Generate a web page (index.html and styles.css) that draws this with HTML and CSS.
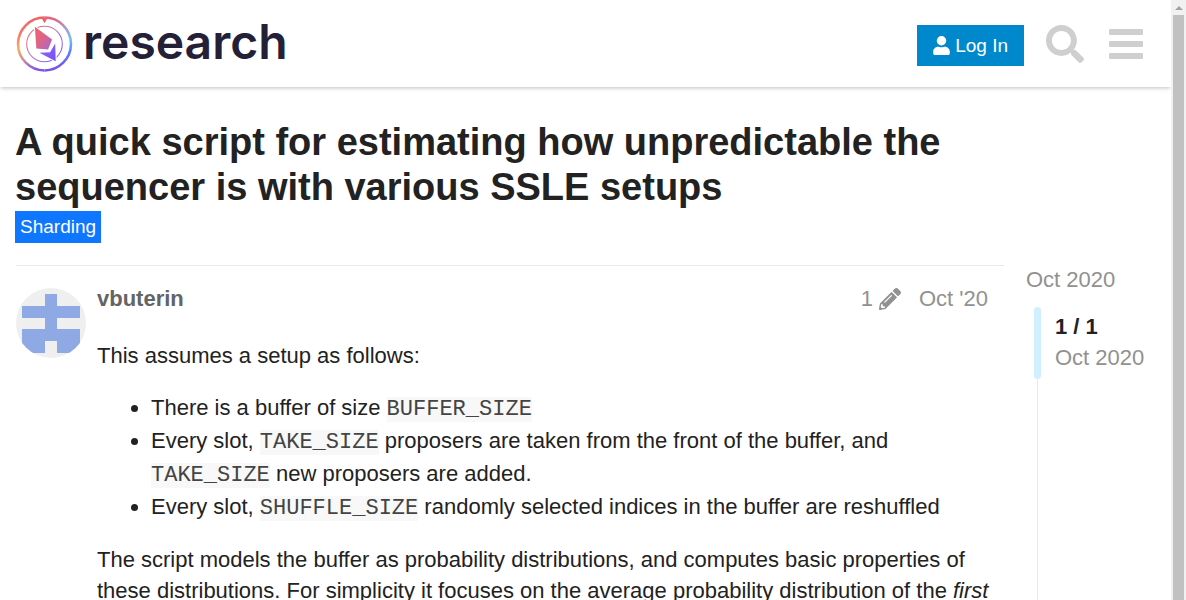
FILE: index.html
```html
<!DOCTYPE html>
<html lang="en">
<head>
<meta charset="utf-8">
<meta name="viewport" content="width=device-width, initial-scale=1">
<title>A quick script for estimating how unpredictable the sequencer is</title>
<link rel="stylesheet" href="styles.css">
</head>
<body>
<div class="viewport">
  <div class="page">
    <header class="header">
      <a class="logo" href="#">
        <svg class="logo-mark" viewBox="0 0 56 56" aria-hidden="true">
          <defs>
            <linearGradient id="warm" x1="0" y1="0" x2="0" y2="1">
              <stop offset="0" stop-color="#f2625f"/><stop offset=".3" stop-color="#fa7468"/><stop offset=".6" stop-color="#f9ae61"/><stop offset=".82" stop-color="#c78aa5"/><stop offset="1" stop-color="#7a50ea"/>
            </linearGradient>
            <linearGradient id="cool" x1="0" y1="0" x2="0" y2="1">
              <stop offset="0" stop-color="#e8607a"/><stop offset=".2" stop-color="#a99bc8"/><stop offset=".42" stop-color="#69c4ee"/><stop offset=".68" stop-color="#5c78ff"/><stop offset="1" stop-color="#7a50ea"/>
            </linearGradient>
            <linearGradient id="inner" x1="0" y1="0" x2="1" y2="1">
              <stop offset="0" stop-color="#f66d68"/><stop offset=".5" stop-color="#b276bd"/><stop offset="1" stop-color="#6c5cff"/>
            </linearGradient>
            <linearGradient id="gem" x1="0" y1="0" x2="1" y2="1">
              <stop offset="0" stop-color="#f5616c"/><stop offset=".5" stop-color="#dc6489"/><stop offset="1" stop-color="#9c69d8"/>
            </linearGradient>
            <linearGradient id="shard" x1="0" y1="0" x2="1" y2="1">
              <stop offset="0" stop-color="#a466e5"/><stop offset="1" stop-color="#6e50ff"/>
            </linearGradient>
          </defs>
          <path d="M28 2.500A26 26 0 0 0 28 54.500" fill="none" stroke="url(#warm)" stroke-width="2.500"/>
          <path d="M28 2.500A26 26 0 0 1 28 54.500" fill="none" stroke="url(#cool)" stroke-width="2.500"/>
          <path d="M25 3h6L28 8z" fill="#ec6270"/>
          <circle cx="28" cy="28.500" r="17.500" fill="none" stroke="url(#inner)" stroke-width="1"/>
          <path d="M18.500 11.500 35.500 24 31.500 34 20 33z" fill="url(#gem)" stroke="#fff" stroke-width="2" paint-order="stroke"/>
          <path d="M23 37 33.500 36.500 38.500 28 39 45.500z" fill="url(#shard)" stroke="#fff" stroke-width="2" paint-order="stroke"/>
        </svg>
        <span class="logo-text">research</span>
      </a>
      <nav class="header-actions">
        <button class="login" type="button">
          <svg class="login-icon" viewBox="0 0 448 512" aria-hidden="true"><path fill="currentColor" d="M224 256a128 128 0 1 0 0-256 128 128 0 0 0 0 256zm90 32h-17a174 174 0 0 1-146 0h-17C60 288 0 348 0 422v42c0 27 21 48 48 48h352c27 0 48-21 48-48v-42c0-74-60-134-134-134z"/></svg>
          <span>Log In</span>
        </button>
        <button class="icon-button" type="button" aria-label="Search">
          <svg class="search-icon" viewBox="0 0 512 512" aria-hidden="true"><path fill="currentColor" d="M505 442.700 405.300 343c-4.500-4.500-10.600-7-17-7H372c27.600-35.300 44-79.700 44-128C416 93.100 322.900 0 208 0S0 93.100 0 208s93.100 208 208 208c48.300 0 92.700-16.400 128-44v16.300c0 6.400 2.500 12.500 7 17l99.700 99.700c9.400 9.400 24.600 9.400 33.900 0l28.300-28.300c9.400-9.400 9.400-24.600.1-34zM208 336c-70.700 0-128-57.200-128-128 0-70.700 57.200-128 128-128 70.700 0 128 57.200 128 128 0 70.700-57.200 128-128 128z"/></svg>
        </button>
        <button class="icon-button" type="button" aria-label="Menu">
          <svg class="menu-icon" viewBox="0 0 34 38" aria-hidden="true"><g fill="currentColor"><rect y="4" width="34" height="6" rx="1"/><rect y="16" width="34" height="6" rx="1"/><rect y="28" width="34" height="6" rx="1"/></g></svg>
        </button>
      </nav>
    </header>
    <main class="topic">
      <h1 class="title">A quick script for estimating how unpredictable the sequencer is with various SSLE setups</h1>
      <a class="category" href="#">Sharding</a>
      <div class="columns">
        <article class="post">
          <svg class="avatar" viewBox="0 0 70 70" role="img" aria-label="vbuterin">
            <defs><clipPath id="round"><circle cx="35" cy="35" r="35"/></clipPath></defs>
            <g clip-path="url(#round)"><path fill="#efefef" d="M0 0h70v70H0z"/><path fill="#8ea9e4" d="M29 6h12v12h23v12H41v11h23v24H41V53H29v12H6V41h23V30H6V18h23z"/></g>
          </svg>
          <div class="post-main">
            <div class="meta">
              <a class="author" href="#">vbuterin</a>
              <div class="meta-right">
                <button class="edits" type="button" aria-label="1 edit">
                  <span>1</span>
                  <svg class="pencil" viewBox="0 0 512 512" aria-hidden="true"><path fill="currentColor" d="M497.900 142.100l-46.100 46.100c-4.700 4.700-12.300 4.700-17 0l-111-111c-4.700-4.700-4.700-12.300 0-17l46.100-46.100c18.700-18.700 49.100-18.700 67.900 0l60.100 60.100c18.800 18.700 18.800 49.100 0 67.900zM284.200 99.800L21.600 362.400.4 483.900c-2.900 16.400 11.400 30.600 27.800 27.800l121.500-21.300 262.600-262.600c4.700-4.700 4.700-12.300 0-17l-111-111c-4.800-4.700-12.400-4.700-17.100 0zM124.100 339.900c-5.500-5.500-5.500-14.300 0-19.800l154-154c5.500-5.500 14.300-5.500 19.800 0s5.500 14.300 0 19.800l-154 154c-5.500 5.500-14.300 5.500-19.800 0zM88 424h48v36.300l-64.500 11.300-31.100-31.100L51.700 376H88v48z"/></svg>
                </button>
                <a class="date" href="#">Oct '20</a>
              </div>
            </div>
            <div class="content">
              <p>This assumes a setup as follows:</p>
              <ul>
                <li>There is a buffer of size <code>BUFFER_SIZE</code></li>
                <li>Every slot, <code>TAKE_SIZE</code> proposers are taken from the front of the buffer, and <code>TAKE_SIZE</code> new proposers are added.</li>
                <li>Every slot, <code>SHUFFLE_SIZE</code> randomly selected indices in the buffer are reshuffled</li>
              </ul>
              <p>The script models the buffer as probability distributions, and computes basic properties of these distributions. For simplicity it focuses on the average probability distribution of the <em>first</em></p>
            </div>
          </div>
        </article>
        <aside class="timeline">
          <a class="start" href="#">Oct 2020</a>
          <div class="scroller">
            <div class="position">
              <div class="handle"></div>
              <div class="place"><strong>1 / 1</strong><span>Oct 2020</span></div>
            </div>
          </div>
        </aside>
      </div>
    </main>
  </div>
  <div class="scrollbar" aria-hidden="true"><div class="scroll-up"></div><div class="thumb"></div></div>
</div>
</body>
</html>
```
FILE: styles.css
```css
* { box-sizing: border-box; }
body {
  margin: 0;
  font-family: "Liberation Sans", Arial, sans-serif;
  font-size: 22px;
  line-height: 31px;
  color: #222;
  background: #fff;
}
a { color: inherit; text-decoration: none; }
button { border: 0; padding: 0; background: none; font: inherit; color: inherit; cursor: pointer; }
svg { display: block; flex: none; }

.viewport { display: flex; height: 100vh; overflow: hidden; }
.page { flex: 1; min-width: 0; overflow: hidden; }

.header {
  display: flex;
  align-items: center;
  justify-content: space-between;
  padding: 15px 28px 15px 16px;
  box-shadow: 0 2px 4px -1px rgba(0, 0, 0, .25);
}
.logo { display: flex; align-items: center; gap: 10px; color: #242038; }
.logo-mark { width: 57px; height: 57px; }
.logo-text { padding-bottom: 3px; font: 600 48px/52px Inter, sans-serif; }
.header-actions { display: flex; align-items: center; gap: 22px; }
.login {
  display: flex;
  align-items: center;
  gap: 5px;
  height: 41px;
  margin-top: 4px;
  padding: 0 16px;
  background: #0088cc;
  color: #fff;
  font-size: 19px;
}
.login-icon { width: 17px; height: 19px; }
.icon-button { color: #cfcfcf; }
.icon-button + .icon-button { margin-left: 3px; }
.search-icon { width: 38px; height: 38px; }
.menu-icon { width: 34px; height: 38px; }

.topic { padding: 33px 28px 0 15px; }
.title { margin: 0; max-width: 988px; font-size: 38px; line-height: 45px; }
.category {
  display: table;
  margin-top: 1px;
  padding: 0 5px;
  background: #0e76ff;
  color: #fff;
  font-size: 19px;
  line-height: 32px;
}
.columns { display: flex; gap: 22px; margin-top: 22px; }
.post { display: flex; flex: 1; min-width: 0; gap: 11px; margin-left: 1px; padding-top: 22px; border-top: 1px solid #e9e9e9; }
.avatar { width: 70px; height: 70px; }
.post-main { flex: 1; min-width: 0; }
.meta { display: flex; justify-content: space-between; height: 22px; line-height: 22px; padding-right: 16px; color: #919191; }
.author { color: #646464; font-weight: 700; }
.meta-right { display: flex; gap: 18px; }
.edits { display: flex; gap: 6px; }
.pencil { width: 22px; height: 22px; }
.content { padding-top: 30px; }
.content p { margin: 0 0 21px; }
.content ul { margin: 0 0 20px; padding-left: 54px; }
.content code { font-family: "Liberation Mono", monospace; font-size: 22px; color: #444; background: #f8f8f8; }

.timeline { width: 117px; color: #919191; }
.start { display: block; line-height: 30px; }
.scroller { height: 400px; margin: 12px 0 0 11px; border-left: 1px solid #d1f0ff; }
.position { display: flex; gap: 14px; margin-left: -4px; white-space: nowrap; }
.handle { flex: none; width: 7px; background: #d1f0ff; border-radius: 4px; }
.place { display: flex; flex-direction: column; padding: 4px 0 6px; }
.place strong { color: #222; }

.scrollbar { width: 15px; padding: 6px 2px 0; background: #f1f1f1; }
.scroll-up { width: 0; margin: 0 auto 5px; border: 4px solid transparent; border-top: 0; border-bottom-color: #a3a3a3; }
.thumb { height: 100%; background: #c1c1c1; }
```
